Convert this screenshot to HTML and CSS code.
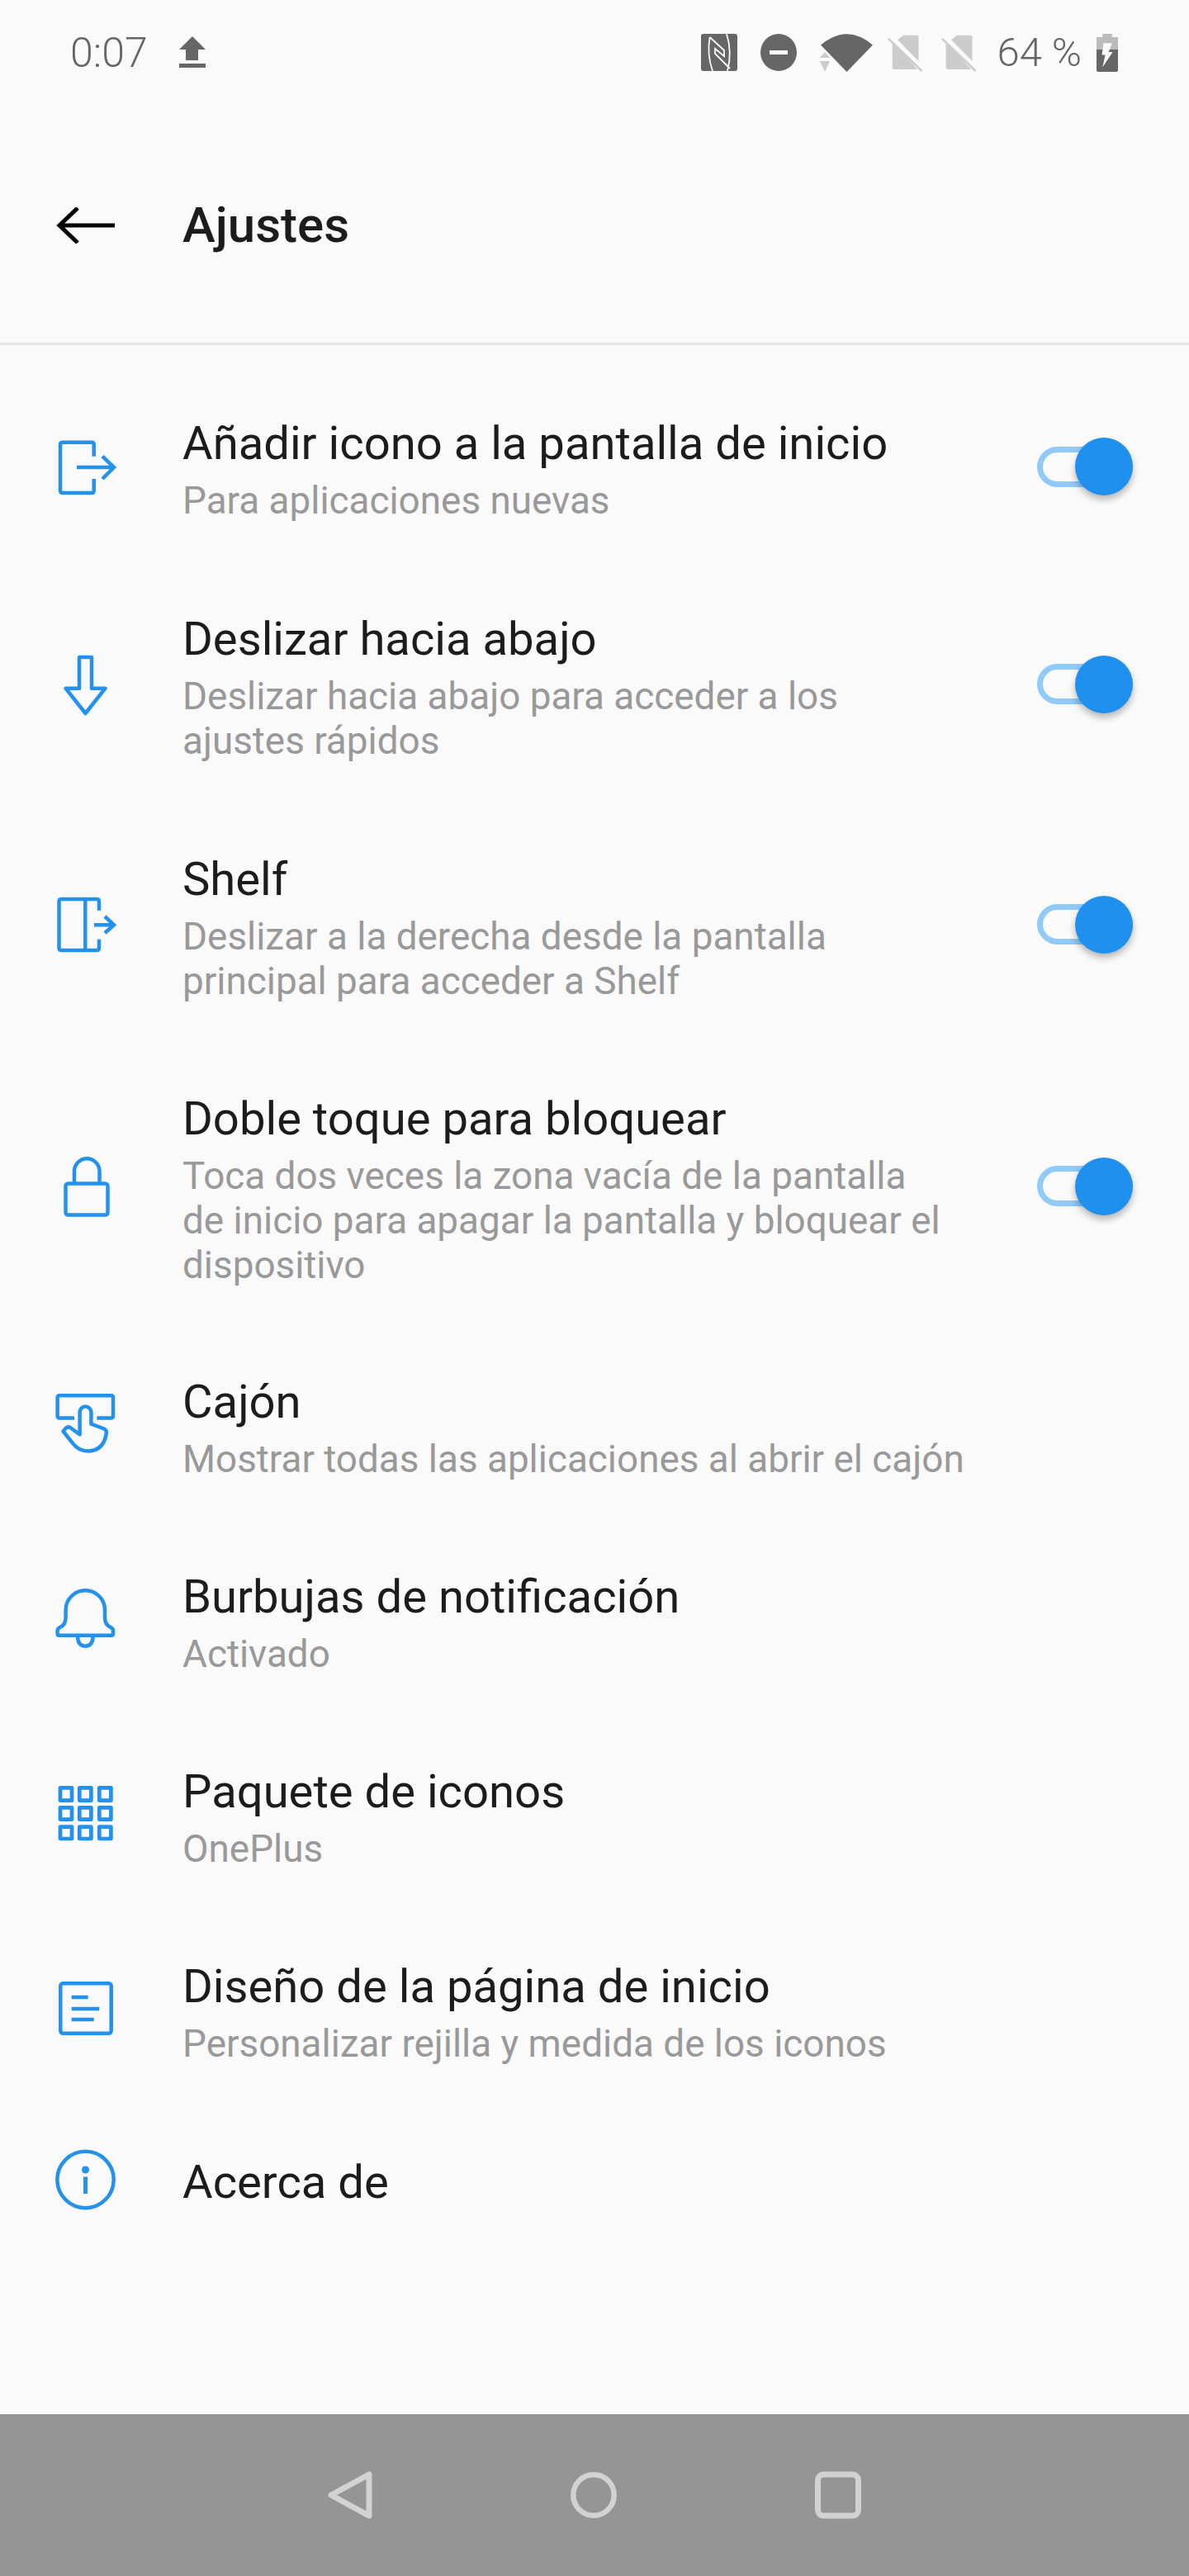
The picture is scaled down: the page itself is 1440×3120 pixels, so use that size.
FILE: index.html
```html
<!DOCTYPE html>
<html lang="es">
<head>
<meta charset="utf-8">
<title>Ajustes</title>
<link rel="stylesheet" href="styles.css">
</head>
<body>
<div class="screen">
  <header class="status">
    <div class="status-left">
      <span class="status-text">0:07</span>
      <svg class="st-up" viewBox="0 -4 32 48" width="32" height="48"><path d="M16 0 L32 16 H23 V29 H8 V16 H0 Z M0 33 H32 V38 H0 Z" fill="#666"/></svg>
    </div>
    <div class="status-right">
      <svg class="st" width="44" height="48" viewBox="0 -1 44 48"><rect width="44" height="45" rx="3" fill="#666"/><path d="M10.600 4 Q7 25 14 45 M31 0 Q38 22 32 45 M10.600 4 L28 20 V27 L17 18 V24 L35 42" fill="none" stroke="#fafafa" stroke-width="1.800"/></svg>
      <svg class="st m28" width="44" height="48" viewBox="0 -1 44 48"><ellipse cx="22" cy="22.500" rx="22" ry="22.500" fill="#666"/><rect x="11" y="20" width="22" height="5" fill="#fafafa"/></svg>
      <svg class="st m29" width="63" height="48" viewBox="0 -1 63 48"><path d="M31.500 46 L0 13.500 Q31.500 -13 63 13.500 Z" fill="#666"/><path d="M5 22 L11 29 H-1 Z M-1 33 H11 L5 46 Z" fill="#ccc"/></svg>
      <svg class="st m18" width="42" height="48" viewBox="0 -2 42 48"><path d="M12 6.300 L19 .7 H35 Q37.500 .7 37.500 3 V32 Z M5.700 8 L36 42 H8 Q5.700 42 5.700 40 Z" fill="#ccc"/><path d="M.8 4.700 L41.600 44" stroke="#ccc" stroke-width="2.500"/></svg>
      <svg class="st m23" width="42" height="48" viewBox="0 -2 42 48"><path d="M12 6.300 L19 .7 H35 Q37.500 .7 37.500 3 V32 Z M5.700 8 L36 42 H8 Q5.700 42 5.700 40 Z" fill="#ccc"/><path d="M.8 4.700 L41.600 44" stroke="#ccc" stroke-width="2.500"/></svg>
      <span class="status-text pct">64 %</span>
      <svg class="st m18" width="26" height="48" viewBox="0 -1 26 48"><path d="M7.300 0 H18.800 V4 H26 V19 H0 V4 H7.300 Z" fill="#bbb"/><path d="M0 19 H26 V44 Q26 46 24 46 H2 Q0 46 0 44 Z" fill="#666"/><path d="M8.500 11.300 H18.800 L14.700 22 H19.600 L7.300 40.500 L10.600 25.600 H6.500 Z" fill="#fafafa"/></svg>
    </div>
  </header>

  <div class="toolbar">
    <svg class="back" viewBox="0 0 72 44" width="72" height="44"><path d="M71 22 H4 M26 1 L4 22 L26 43" fill="none" stroke="#000" stroke-width="5"/></svg>
    <h1 class="title">Ajustes</h1>
  </div>

  <main class="list">
    <div class="row r1">
      <svg class="ico" viewBox="0 0 72 72"><path d="M45.700 23.700 V9.500 Q45.700 6.700 43 6.700 H8 Q5 6.700 5 9.500 V65 Q5 68 8 68 H43 Q45.700 68 45.700 65 V51 M25 37 H70 M56 23.700 L70 37 L56 51" fill="none" stroke="#2491ec" stroke-width="4.500"/></svg>
      <div class="txt"><div class="t">Añadir icono a la pantalla de inicio</div><div class="s">Para aplicaciones nuevas</div></div>
      <div class="sw"><span class="knob"></span></div>
    </div>
    <div class="row r2">
      <svg class="ico" viewBox="0 0 72 72"><path d="M28 3 H43 V40.700 H59.500 L35.500 71 L11.500 40.700 H28 Z" fill="none" stroke="#2491ec" stroke-width="4.500" stroke-linejoin="round"/></svg>
      <div class="txt"><div class="t">Deslizar hacia abajo</div><div class="s">Deslizar hacia abajo para acceder a los<br>ajustes rápidos</div></div>
      <div class="sw"><span class="knob"></span></div>
    </div>
    <div class="row r2">
      <svg class="ico" viewBox="0 0 72 72"><path d="M52 18.700 V8 Q52 5 49 5 H6.500 Q3.500 5 3.500 8 V64 Q3.500 67 6.500 67 H49 Q52 67 52 64 V53.700 M35.300 5 V67 M46 36.300 H70 M59 26 L70 36.300 L59 46" fill="none" stroke="#2491ec" stroke-width="4.500"/></svg>
      <div class="txt"><div class="t">Shelf</div><div class="s">Deslizar a la derecha desde la pantalla<br>principal para acceder a Shelf</div></div>
      <div class="sw"><span class="knob"></span></div>
    </div>
    <div class="row r3">
      <svg class="ico" viewBox="0 0 72 72"><path d="M22 32 V17.500 A15.250 15.250 0 0 1 52.500 17.500 V32" fill="none" stroke="#2491ec" stroke-width="4.500"/><rect x="11.500" y="32.500" width="51" height="38" rx="3" fill="none" stroke="#2491ec" stroke-width="4.500"/></svg>
      <div class="txt"><div class="t">Doble toque para bloquear</div><div class="s">Toca dos veces la zona vacía de la pantalla<br>de inicio para apagar la pantalla y bloquear el<br>dispositivo</div></div>
      <div class="sw"><span class="knob"></span></div>
    </div>
    <div class="row r1">
      <svg class="ico" viewBox="0 0 72 72"><path d="M22 27.400 H4 Q1.600 27.400 1.600 25 V2.700 Q1.600 .3 4 .3 H66.600 Q69 .3 69 2.700 V25 Q69 27.400 66.600 27.400 H49.300 M42.400 34.700 V20.500 A6.900 6.900 0 0 0 28.600 20.500 V47.500 L17 39 Q14.500 37.500 12 39.500 L8.500 43.500 L20 58 Q27 67.400 38.500 67.400 Q57 67.400 60.700 47 Q61.500 42 58 40.500 Z" fill="none" stroke="#2491ec" stroke-width="4.500" stroke-linejoin="round"/></svg>
      <div class="txt"><div class="t">Cajón</div><div class="s">Mostrar todas las aplicaciones al abrir el cajón</div></div>
    </div>
    <div class="row r1">
      <svg class="ico" viewBox="0 0 72 72"><path d="M3.500 54.700 H67 Q69 54.700 69 52.700 V49 Q69 46.500 66 45 Q59 42 59 33 V24 A23.700 23.700 0 0 0 11.600 24 V33 Q11.600 42 4.600 45 Q1.600 46.500 1.600 49 V52.700 Q1.600 54.700 3.500 54.700 Z M26 55 Q26 67.700 35.300 67.700 Q44.600 67.700 44.600 55" fill="none" stroke="#2491ec" stroke-width="4.500" stroke-linejoin="round"/></svg>
      <div class="txt"><div class="t">Burbujas de notificación</div><div class="s">Activado</div></div>
    </div>
    <div class="row r1">
      <svg class="ico" viewBox="0 0 72 72"><path d="M5 3.300 H19 V18.700 H5 Z M28.300 3.300 H42.400 V18.700 H28.300 Z M52.300 3.300 H66.400 V18.700 H52.300 Z M5 27.300 H19 V41.700 H5 Z M28.300 27.300 H42.400 V41.700 H28.300 Z M52.300 27.300 H66.400 V41.700 H52.300 Z M5 50.700 H19 V65 H5 Z M28.300 50.700 H42.400 V65 H28.300 Z M52.300 50.700 H66.400 V65 H52.300 Z" fill="none" stroke="#2491ec" stroke-width="4.700" stroke-linejoin="round"/></svg>
      <div class="txt"><div class="t">Paquete de iconos</div><div class="s">OnePlus</div></div>
    </div>
    <div class="row r1">
      <svg class="ico" viewBox="0 0 72 72"><rect x="5.300" y="4.300" width="61.400" height="60.400" rx="3" fill="none" stroke="#2491ec" stroke-width="4.500"/><path d="M18.700 21 H38.700 M18.700 35 H52.300 M18.700 48 H45.700" stroke="#2491ec" stroke-width="4.500"/></svg>
      <div class="txt"><div class="t">Diseño de la página de inicio</div><div class="s">Personalizar rejilla y medida de los iconos</div></div>
    </div>
    <div class="row r0">
      <svg class="ico" viewBox="0 0 72 72"><circle cx="35.500" cy="36" r="34.200" fill="none" stroke="#2491ec" stroke-width="4.500"/><circle cx="35.500" cy="24" r="4.500" fill="#2491ec"/><rect x="33" y="32.500" width="5" height="20.500" fill="#2491ec"/></svg>
      <div class="txt"><div class="t">Acerca de</div></div>
    </div>
  </main>

  <nav class="navbar">
    <svg width="56" height="60" viewBox="0 0 56 60"><path d="M50 5 V55 L4 30 Z" fill="none" stroke="#d2d2d2" stroke-width="7" stroke-linejoin="round"/></svg>
    <svg width="56" height="60" viewBox="0 0 56 60"><circle cx="28" cy="30" r="24.700" fill="none" stroke="#d2d2d2" stroke-width="6.500"/></svg>
    <svg class="nav-sq" width="56" height="60" viewBox="0 0 56 60"><rect x="3.500" y="5" width="49" height="50" rx="7" fill="none" stroke="#d2d2d2" stroke-width="7"/></svg>
  </nav>
</div>
</body>
</html>
```
FILE: styles.css
```css
* { box-sizing: border-box; margin: 0; padding: 0; }
html, body { width: 1440px; height: 3120px; overflow: hidden; }
body { background: #fafafa; font-family: Roboto, "Liberation Sans", sans-serif; }
.screen { width: 1440px; height: 3120px; display: flex; flex-direction: column; }
.status { height: 130px; padding: 40px 86px 0 85px; display: flex; justify-content: space-between; align-items: flex-start; flex: none; }
.status-left { display: flex; align-items: center; gap: 38px; height: 48px; }
.status-right { display: flex; align-items: center; height: 48px; }
.status-text { font-size: 50px; font-weight: 300; color: #666; line-height: 50px; }
.st { overflow: visible; flex: none; }
.m18 { margin-left: 18px; }
.m23 { margin-left: 23px; }
.m28 { margin-left: 28px; }
.m29 { margin-left: 29px; }
.pct { margin-left: 25px; font-size: 49px; }
.toolbar { height: 288px; flex: none; padding: 0 0 0 68px; display: flex; align-items: center; border-bottom: 3px solid #e6e6e6; }
.back { flex: none; }
.title { font-size: 60px; font-weight: 500; color: #1c1c1c; margin-left: 81px; }
.list { flex: 1; padding-top: 29px; }
.row { display: flex; align-items: center; padding: 0 68px; }
.r1 { height: 236px; }
.r2 { height: 291px; }
.r3 { height: 343px; }
.r0 { height: 176px; }
.ico { width: 72px; height: 72px; flex: none; overflow: visible; }
.txt { flex: 1; margin-left: 81px; padding-top: 6px; }
.t { font-size: 56.2px; line-height: 68px; color: #1c1c1c; }
.s { font-size: 45.85px; line-height: 54px; color: #999; margin-top: 8px; }
.sw { position: relative; width: 116px; height: 49px; border: 7px solid #90caf9; border-radius: 25px; flex: none; }
.knob { position: absolute; right: -7px; top: 50%; width: 70px; height: 70px; margin-top: -35px; border-radius: 50%; background: #2090ef; box-shadow: 0 5px 8px rgba(0,0,0,.28); }
.navbar { height: 196px; flex: none; background: #959595; display: flex; justify-content: center; align-items: center; gap: 238px; }
.nav-sq { margin-left: 2px; }
```
